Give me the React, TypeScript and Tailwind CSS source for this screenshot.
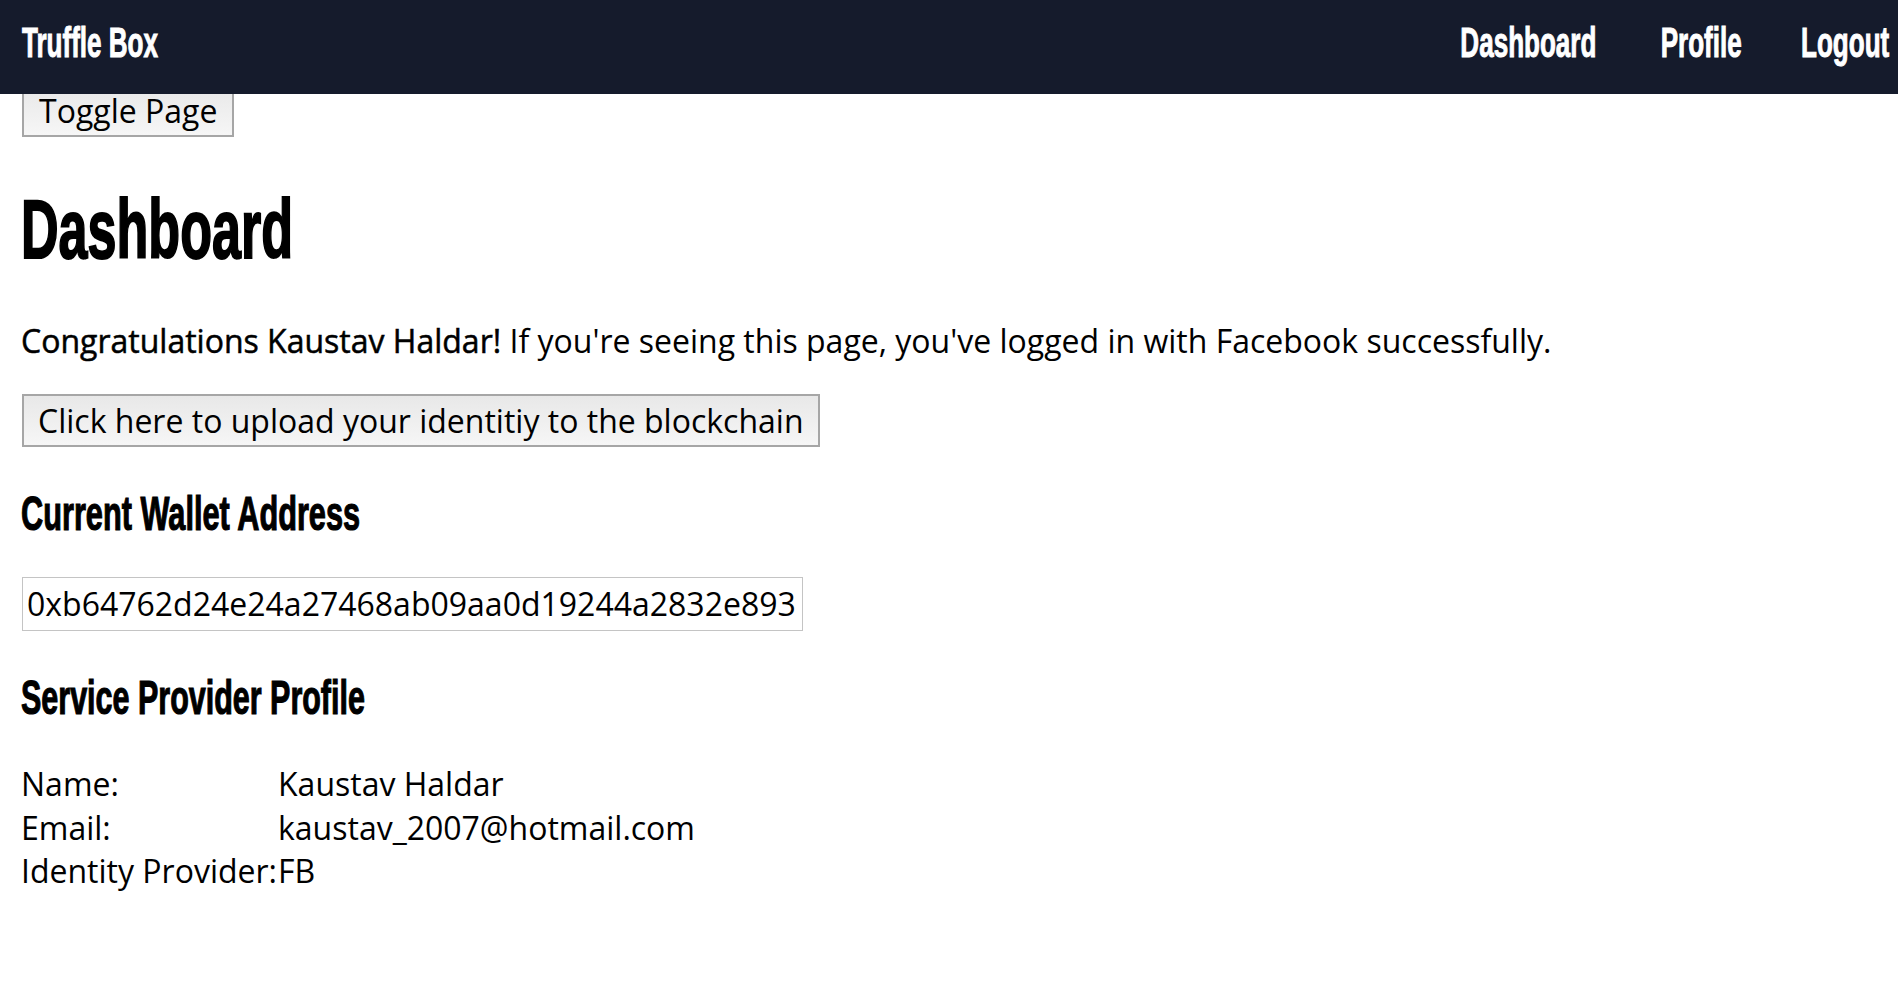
const heading = { fontFamily: '"Liberation Sans Narrow", "Liberation Sans", Arial, sans-serif' };

const profile = [
  { label: 'Name:', value: 'Kaustav Haldar' },
  { label: 'Email:', value: 'kaustav_2007@hotmail.com' },
  { label: 'Identity Provider:', value: 'FB' },
];

function NavLink({ label, width }: { label: string; width: string }) {
  return (
    <div className={`flex justify-end ${width}`}>
      <span className="inline-block origin-right scale-x-[0.62] whitespace-nowrap [-webkit-text-stroke:1px_white]">{label}</span>
    </div>
  );
}

export default function App() {
  return (
    <div className="min-h-screen bg-white text-black font-['Open_Sans',sans-serif] text-[32px]">
      {/* Top bar */}
      <nav
        className="fixed top-0 inset-x-0 z-10 h-[94px] bg-[#151b2c] text-white flex items-start justify-between pt-[22px] pl-[22px] pr-[9px] font-['Liberation_Sans_Narrow','Liberation_Sans',sans-serif] font-bold text-[42px] leading-[42px]"
      >
        <span className="inline-block origin-left scale-x-[0.62] whitespace-nowrap [-webkit-text-stroke:1px_white]">Truffle Box</span>
        <div className="flex gap-[65px]">
          <NavLink label="Dashboard" width="w-[134px]" />
          <NavLink label="Profile" width="w-[81px]" />
          <NavLink label="Logout" width="w-[82px]" />
        </div>
      </nav>

      <main className="pt-[84px] px-[21px] pb-[80px]">
        <button className="ml-[1px] border-2 border-[#a6a6a6] bg-gradient-to-b from-[#e8e8e8] to-[#f6f6f6] px-[15px] py-[2px] leading-[45px]">
          Toggle Page
        </button>

        <h1 className="mt-[50px] font-bold text-[84px] leading-[84px]" style={heading}>
          <span className="inline-block origin-left scale-x-[0.62] whitespace-nowrap [-webkit-text-stroke:2px_black]">Dashboard</span>
        </h1>

        <p className="mt-[48px] leading-[44px]">
          <strong className="font-normal [-webkit-text-stroke:0.5px_black]">Congratulations Kaustav Haldar!</strong> If you're
          seeing this page, you've logged in with Facebook successfully.
        </p>

        <button className="mt-[31px] ml-[1px] block border-2 border-[#a6a6a6] bg-gradient-to-b from-[#e8e8e8] to-[#f6f6f6] px-[14px] py-[2px] leading-[45px]">
          Click here to upload your identitiy to the blockchain
        </button>

        <h2 className="mt-[43px] font-bold text-[48px] leading-[48px]" style={heading}>
          <span className="inline-block origin-left scale-x-[0.64] whitespace-nowrap [-webkit-text-stroke:1.2px_black]">Current Wallet Address</span>
        </h2>

        <input
          readOnly
          value="0xb64762d24e24a27468ab09aa0d19244a2832e893"
          className="mt-[39px] ml-[1px] block w-[781px] border border-[#c4c4c4] px-[4px] py-[4px] leading-[44px] outline-none"
        />

        <h2 className="mt-[43px] font-bold text-[48px] leading-[48px]" style={heading}>
          <span className="inline-block origin-left scale-x-[0.635] whitespace-nowrap [-webkit-text-stroke:1.2px_black]">Service Provider Profile</span>
        </h2>

        <div className="mt-[40px] grid grid-cols-[257px_1fr] leading-[43.5px]">
          {profile.map((row) => (
            <div key={row.label} className="contents">
              <span className="whitespace-nowrap">{row.label}</span>
              <span>{row.value}</span>
            </div>
          ))}
        </div>
      </main>
    </div>
  );
}
